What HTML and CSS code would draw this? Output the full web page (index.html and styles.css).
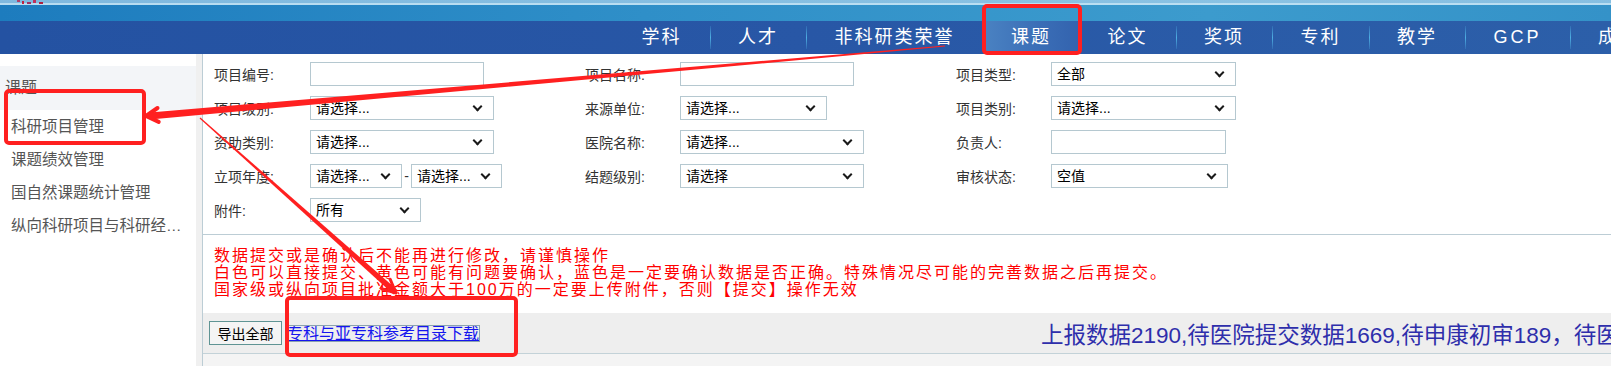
FILE: index.html
```html
<!DOCTYPE html>
<html lang="zh-CN">
<head>
    <meta charset="UTF-8">
    <meta name="viewport" content="width=device-width, initial-scale=1.0">
    <title>课题 - 科研项目管理</title>
    <link rel="stylesheet" href="styles.css">
</head>
<body>
    <!-- Top banner + main menu -->
    <div class="topbar">
        <svg class="logo-bits" width="30" height="5" viewBox="0 0 30 5">
            <rect x="0" y="0" width="3" height="2" fill="#b0406a"/>
            <rect x="5" y="1" width="2" height="3" fill="#c02040"/>
            <rect x="10" y="2" width="4" height="2" fill="#a03060"/>
            <rect x="16" y="0" width="3" height="3" fill="#c0305a"/>
            <rect x="22" y="2" width="4" height="2" fill="#b02040"/>
        </svg>
        <div class="banner"></div>
        <nav class="nav">
            <a href="#">学科</a><span class="sep"></span>
            <a href="#">人才</a><span class="sep"></span>
            <a href="#">非科研类荣誉</a><span class="sep"></span>
            <a href="#" class="active">课题</a><span class="sep"></span>
            <a href="#">论文</a><span class="sep"></span>
            <a href="#">奖项</a><span class="sep"></span>
            <a href="#">专利</a><span class="sep"></span>
            <a href="#">教学</a><span class="sep"></span>
            <a href="#" class="latin">GCP</a><span class="sep"></span>
            <a href="#">成果</a>
        </nav>
    </div>

    <div class="layout">
        <!-- Left menu -->
        <aside class="sidebar">
            <div class="side-title">课题</div>
            <a href="#" class="side-item">科研项目管理</a>
            <a href="#" class="side-item">课题绩效管理</a>
            <a href="#" class="side-item">国自然课题统计管理</a>
            <a href="#" class="side-item">纵向科研项目与科研经费管理</a>
        </aside>
        <div class="splitter"></div>

        <main class="content">
            <!-- Search form -->
            <form class="search">
                <label>项目编号:</label>
                <div><input type="text" class="ctl w174"></div>
                <label>项目名称:</label>
                <div><input type="text" class="ctl w174"></div>
                <label>项目类型:</label>
                <div><span class="sel w185"><select class="ctl"><option>全部</option></select></span></div>

                <label>项目级别:</label>
                <div><span class="sel w184"><select class="ctl"><option>请选择...</option></select></span></div>
                <label>来源单位:</label>
                <div><span class="sel w147"><select class="ctl"><option>请选择...</option></select></span></div>
                <label>项目类别:</label>
                <div><span class="sel w185"><select class="ctl"><option>请选择...</option></select></span></div>

                <label>资助类别:</label>
                <div><span class="sel w184"><select class="ctl"><option>请选择...</option></select></span></div>
                <label>医院名称:</label>
                <div><span class="sel w184"><select class="ctl"><option>请选择...</option></select></span></div>
                <label>负责人:</label>
                <div><input type="text" class="ctl w175"></div>

                <label>立项年度:</label>
                <div class="pair">
                    <span class="sel w92"><select class="ctl"><option>请选择...</option></select></span>
                    <span class="dash">-</span>
                    <span class="sel w91"><select class="ctl"><option>请选择...</option></select></span>
                </div>
                <label>结题级别:</label>
                <div><span class="sel w184"><select class="ctl"><option>请选择</option></select></span></div>
                <label>审核状态:</label>
                <div><span class="sel w177"><select class="ctl"><option>空值</option></select></span></div>

                <label>附件:</label>
                <div><span class="sel w111"><select class="ctl"><option>所有</option></select></span></div>
            </form>

            <!-- Notice -->
            <div class="notice">
                <p>数据提交或是确认后不能再进行修改，请谨慎操作</p>
                <p>白色可以直接提交、黄色可能有问题要确认，蓝色是一定要确认数据是否正确。特殊情况尽可能的完善数据之后再提交。</p>
                <p>国家级或纵向项目批准金额大于100万的一定要上传附件，否则【提交】操作无效</p>
            </div>

            <!-- Toolbar -->
            <div class="toolbar">
                <button type="button" class="btn">导出全部</button>
                <a href="#" class="download">专科与亚专科参考目录下载</a>
                <span class="stats">上报数据2190,待医院提交数据1669,待申康初审189，待医院审核数据120</span>
            </div>
            <div class="fill"></div>
        </main>
    </div>

    <!-- Red annotations drawn on the screenshot -->
    <svg class="marks" width="1611" height="366" viewBox="0 0 1611 366">
        <g fill="none" stroke="#ff2020" stroke-width="4" stroke-linejoin="round" stroke-linecap="round">
            <rect x="984" y="6" width="96" height="47" rx="3"/>
            <rect x="6" y="91" width="138" height="52" rx="3"/>
            <rect x="287" y="298" width="229" height="57" rx="3"/>
            <polyline points="157.5,108 146,116 158.7,121.9"/>
            <polyline points="390.1,279.2 396,293 381.6,288.7" stroke-width="3"/>
        </g>
        <g fill="#ff2020">
            <polygon points="150.3,119.5 945,46.6 945,45.6 149.7,112.5"/>
            <polygon points="199.6,118.4 393.6,294.5 397.4,290.1 200.4,117.6"/>
        </g>
    </svg>
</body>
</html>
```

FILE: styles.css
```css
body {
    margin: 0;
    width: 1611px;
    height: 366px;
    overflow: hidden;
    position: relative;
    font-family: "Liberation Sans", "Noto Sans CJK SC", sans-serif;
    color: #333;
    background-color: #ffffff;
}

/* ---------- Top banner ---------- */
.topbar {
    height: 54px;
    position: relative;
    background: linear-gradient(to right, #1d7cbe, #2f8fc8 40%, #3c9bcd 75%, #3492c8);
}

.logo-bits {
    position: absolute;
    left: 17px;
    top: 0;
}

.banner {
    height: 21px;
    background: linear-gradient(to bottom, rgba(170, 210, 236, 0.7) 0, rgba(170, 210, 236, 0.7) 3px, rgba(200, 230, 246, 0.9) 3px, rgba(200, 230, 246, 0.9) 5px, transparent 5px);
}

.nav {
    height: 33px;
    display: flex;
    align-items: center;
    padding-left: 614px;
    white-space: nowrap;
    overflow: hidden;
    background: linear-gradient(to right, #2452a2, #2857a6 50%, #2c5fa9);
}

.nav a {
    display: block;
    flex-shrink: 0;
    height: 33px;
    line-height: 33px;
    padding: 0 28px 0 27.5px;
    font-size: 18px;
    letter-spacing: 2px;
    color: #ffffff;
    text-decoration: none;
}

.nav a.latin {
    letter-spacing: 3px;
}

.nav a.active {
    background: linear-gradient(to right, #4a82c2, #3a6db6 60%, #3363ae);
}

.nav .sep {
    flex-shrink: 0;
    width: 1px;
    height: 23px;
    background: linear-gradient(to bottom, rgba(80, 170, 225, 0.2), #4eaee2 50%, rgba(80, 170, 225, 0.2));
}

/* ---------- Layout ---------- */
.layout {
    display: flex;
    height: 312px;
}

.sidebar {
    width: 196px;
    flex-shrink: 0;
    padding-top: 12px;
    background-color: #ffffff;
}

.side-title {
    height: 44px;
    line-height: 44px;
    padding-left: 5px;
    font-size: 16px;
    color: #555;
    background-color: #f3f5f8;
}

.side-item {
    display: block;
    height: 33px;
    line-height: 33px;
    padding: 0 8px 0 11px;
    font-size: 15.5px;
    color: #555;
    text-decoration: none;
    white-space: nowrap;
    overflow: hidden;
    text-overflow: ellipsis;
}

.splitter {
    width: 6px;
    flex-shrink: 0;
    background-color: #f0f0f0;
}

.content {
    flex: 1;
    display: flex;
    flex-direction: column;
    border-left: 1px solid #bccdd5;
    min-width: 0;
}

/* ---------- Search form ---------- */
.search {
    display: grid;
    grid-template-columns: 96px 275px 95px 276px 95px 1fr;
    grid-auto-rows: 24px;
    row-gap: 10px;
    align-items: center;
    padding: 8px 0 12px 11px;
    border-bottom: 1px solid #bccdd5;
}

.search label {
    font-size: 14px;
    color: #333;
    white-space: nowrap;
}

.search > div {
    display: flex;
    align-items: center;
    height: 24px;
}

.ctl {
    box-sizing: border-box;
    height: 24px;
    border: 1px solid #b5c8d0;
    background-color: #ffffff;
    font-family: "Liberation Sans", "Noto Sans CJK SC", sans-serif;
    font-size: 14px;
    color: #000;
    padding: 0 5px;
    margin: 0;
    border-radius: 0;
    outline: none;
}

.sel {
    position: relative;
    display: block;
    height: 24px;
}

.sel select {
    width: 100%;
    -webkit-appearance: none;
    appearance: none;
}

.sel::after {
    content: "";
    position: absolute;
    right: 13px;
    top: 7px;
    width: 5px;
    height: 5px;
    border-right: 2px solid #1a1a1a;
    border-bottom: 2px solid #1a1a1a;
    transform: rotate(45deg);
    pointer-events: none;
}

.pair .dash {
    width: 9px;
    text-align: center;
    font-size: 14px;
    color: #333;
}

.w91 { width: 91px; }
.w92 { width: 92px; }
.w111 { width: 111px; }
.w147 { width: 147px; }
.w174 { width: 174px; }
.w175 { width: 175px; }
.w177 { width: 177px; }
.w184 { width: 184px; }
.w185 { width: 185px; }

/* ---------- Notice ---------- */
.notice {
    padding: 12px 11px 15px;
    color: #ff0000;
    font-size: 16px;
    letter-spacing: 2px;
    line-height: 17px;
    white-space: nowrap;
}

.notice p {
    margin: 0;
}

/* ---------- Toolbar ---------- */
.toolbar {
    height: 40px;
    display: flex;
    align-items: center;
    padding-left: 6px;
    background-color: #eeeeee;
    border-bottom: 1px solid #c3d2d8;
    white-space: nowrap;
    overflow: hidden;
}

.toolbar > * {
    flex-shrink: 0;
}

.btn {
    width: 73px;
    height: 24px;
    padding: 0;
    border: 1px solid #5f9494;
    background-color: #f4f4f4;
    font-family: "Liberation Sans", "Noto Sans CJK SC", sans-serif;
    font-size: 14px;
    color: #000;
}

.download {
    margin-left: 5px;
    font-size: 16px;
    line-height: 15px;
    color: #1515ee;
    text-decoration: underline;
    outline: 1px solid #8aa2b0;
}

.stats {
    margin-left: 562px;
    font-size: 22.5px;
    color: #2e2eab;
}

.fill {
    flex: 1;
    background-color: #f4f4f4;
}

/* ---------- Annotations ---------- */
.marks {
    position: absolute;
    left: 0;
    top: 0;
    pointer-events: none;
}
```
